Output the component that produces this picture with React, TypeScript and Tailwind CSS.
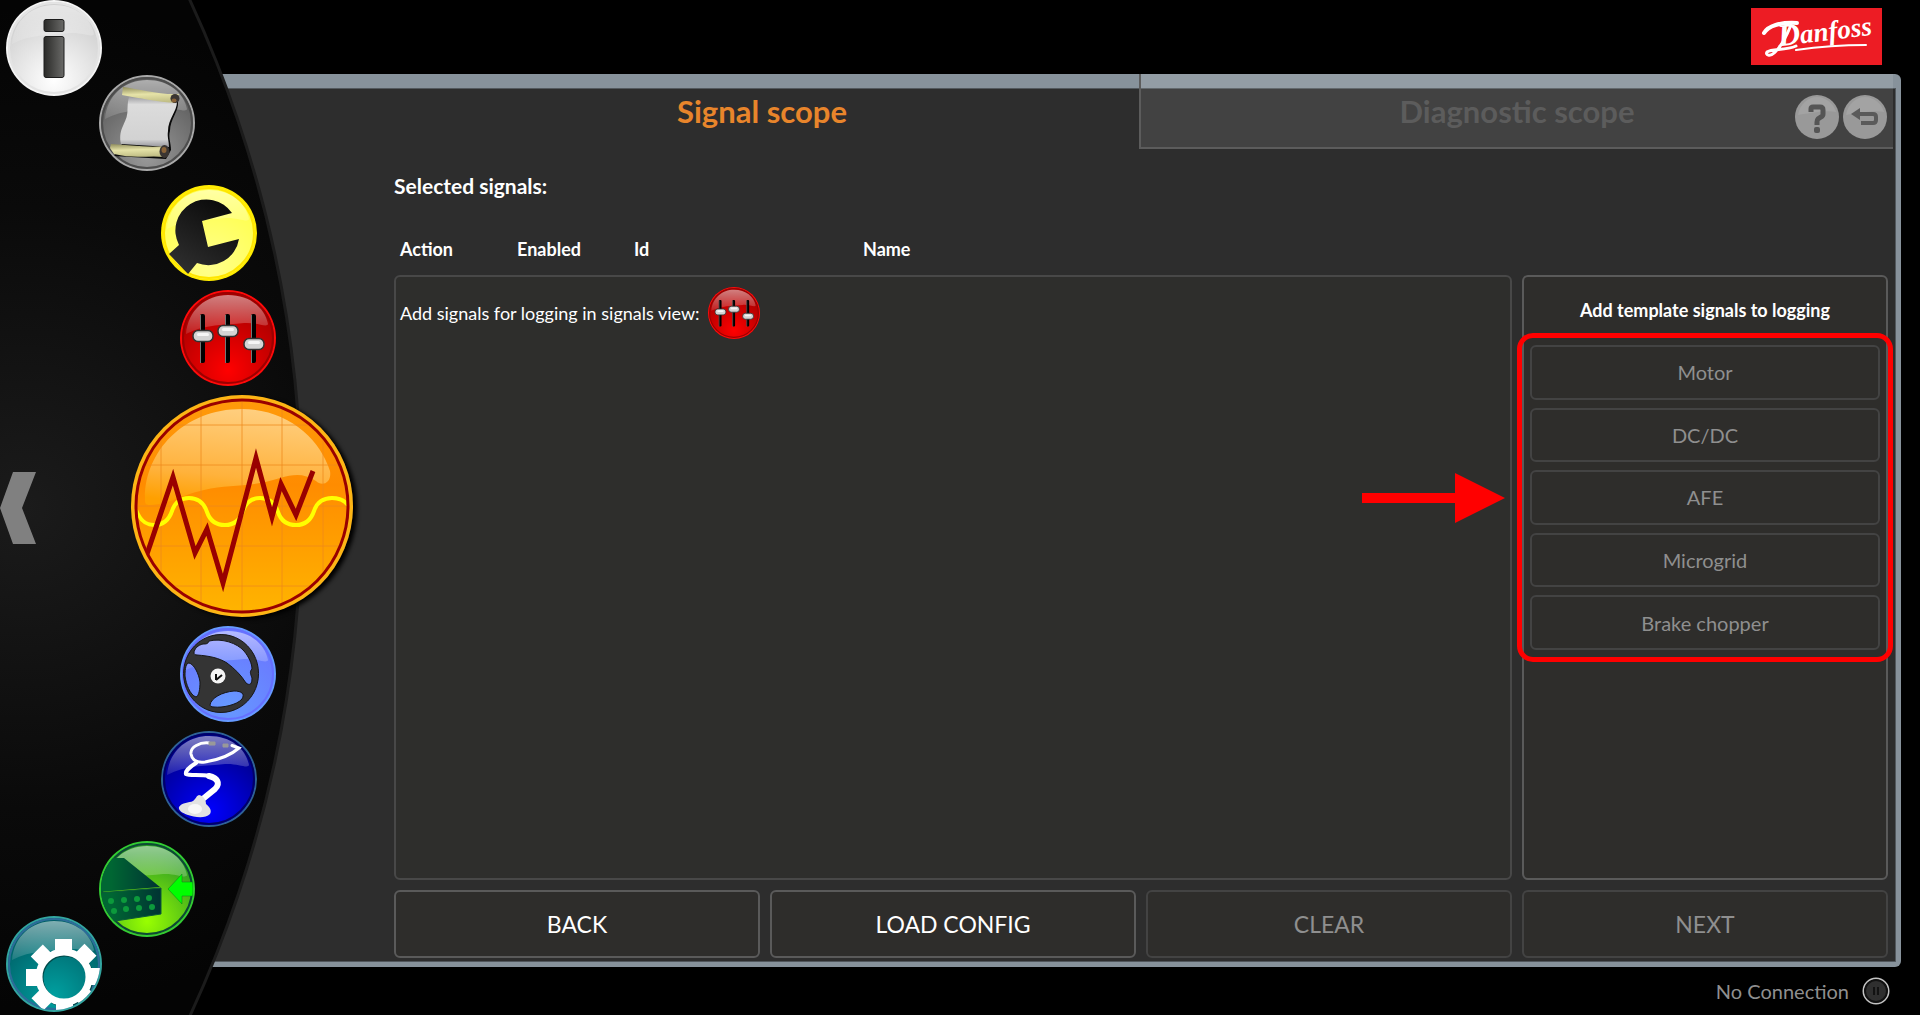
import type { ReactNode } from "react";
import clsx from "clsx";

const GLOSS = "M6 44C8 20 26 5 48 5s37 13 40 29c-1 4-12-2-24-1C45 35 25 34 6 44Z";

type OrbProps = {
  id: string;
  rim: string;
  inner: string;
  from: string;
  to: string;
  children: ReactNode;
};

function Orb({ id, rim, inner, from, to, children }: OrbProps) {
  return (
    <svg viewBox="0 0 96 96" className="block size-full" aria-hidden="true">
      <defs>
        <radialGradient id={`${id}-fill`} cx="0.5" cy="0.85" r="0.75">
          <stop offset="0" stopColor={from} />
          <stop offset="1" stopColor={to} />
        </radialGradient>
        <linearGradient id={`${id}-gloss`} x1="0" y1="0" x2="0" y2="1">
          <stop offset="0" stopColor="#fff" stopOpacity="0.5" />
          <stop offset="1" stopColor="#fff" stopOpacity="0.12" />
        </linearGradient>
        <clipPath id={`${id}-clip`}>
          <circle cx="48" cy="48" r="46" />
        </clipPath>
      </defs>
      <circle cx="48" cy="48" r="48" fill={rim} />
      <circle cx="48" cy="48" r="46" fill={`url(#${id}-fill)`} />
      <circle cx="48" cy="48" r="45" fill="none" stroke={inner} strokeWidth="2" />
      <path d={GLOSS} fill={`url(#${id}-gloss)`} />
      <g clipPath={`url(#${id}-clip)`}>{children}</g>
    </svg>
  );
}

function InfoIcon() {
  return (
    <Orb id="info" rim="#f4f4f4" inner="#e4e4e4" from="#ffffff" to="#cfcfcf">
      <defs>
        <linearGradient id="info-bar">
          <stop offset="0" stopColor="#2a2a28" />
          <stop offset="1" stopColor="#6a6a68" />
        </linearGradient>
      </defs>
      <g fill="url(#info-bar)" stroke="#1c1c1c">
        <rect x="38" y="19.500" width="20" height="12" rx="2" />
        <rect x="38" y="36.500" width="20" height="41" rx="2" />
      </g>
    </Orb>
  );
}

function ScrollIcon() {
  return (
    <Orb id="scroll" rim="#a9a9a9" inner="#4d4d4d" from="#9a9a9a" to="#5e5e5e">
      <defs>
        <linearGradient id="scroll-paper" x1="0" y1="0" x2="0" y2="1">
          <stop offset="0" stopColor="#9f9fa3" />
          <stop offset="0.15" stopColor="#dcdcdc" />
          <stop offset="0.85" stopColor="#d2d2d2" />
          <stop offset="1" stopColor="#96969c" />
        </linearGradient>
        <linearGradient id="scroll-roll" x1="0" y1="0" x2="0.15" y2="1">
          <stop offset="0" stopColor="#8f8c5c" />
          <stop offset="0.5" stopColor="#e6e3a8" />
          <stop offset="1" stopColor="#c2bf86" />
        </linearGradient>
      </defs>
      <path d="M31 24 79 27C80 36 71 44 71 56 69 62 72 68 72 75L67 84 15 81 23 69Z" fill="#0a0a0a" />
      <path d="M30 22 78 27C78 36 69 44 69 56 68 62 70 66 70 72L22 69C19 55 26 50 28 40 29 34 28 29 30 22Z" fill="url(#scroll-paper)" />
      <path d="M24 12C40 14 60 20 80 19L77 28C58 27 40 23 23 20Z" fill="url(#scroll-roll)" />
      <path d="M12 69C30 70 50 73 66 71L66 82C50 80 35 84 15 79L11 73Z" fill="url(#scroll-roll)" />
      <ellipse cx="76" cy="23.500" rx="4.500" ry="4.500" fill="#3a3532" />
      <ellipse cx="75" cy="25.500" rx="2.500" ry="2" fill="#8a6337" />
      <ellipse cx="65.500" cy="76.500" rx="5" ry="6.500" fill="#3a3532" />
      <ellipse cx="65" cy="75" rx="2.500" ry="3" fill="#8a6337" />
    </Orb>
  );
}

function WrenchIcon() {
  return (
    <Orb id="wrench" rim="#ffec00" inner="#ffe600" from="#ffff8c" to="#ffff4d">
      <defs>
        <linearGradient id="wrench-body" x1="0" y1="1" x2="0.6" y2="0">
          <stop offset="0" stopColor="#333" />
          <stop offset="1" stopColor="#0c0c0c" />
        </linearGradient>
      </defs>
      <path d="M71 28 41 36 47 62 78 54A31 31 0 0 1 36 78L27 89 8 69 18 60A31 31 0 0 1 71 28Z" fill="url(#wrench-body)" />
    </Orb>
  );
}

function SlidersIcon({ id }: { id: string }) {
  const knobs = [
    [23, 46],
    [48, 41],
    [74, 54],
  ];
  return (
    <Orb id={id} rim="#ff0a0a" inner="#9c0000" from="#ff0000" to="#a80000">
      {knobs.map(([x, y]) => (
        <g key={x}>
          <rect x={x - 3} y="24" width="5" height="49" rx="2" fill="#000" />
          <path d={`M${x - 2.5} 25v48`} stroke="#777" strokeWidth="1" />
          <rect x={x - 10} y={y - 5.5} width="20" height="11" rx="5" fill="#d4d4d4" stroke="#333" strokeWidth="1.500" />
          <rect x={x - 6} y={y - 3} width="12" height="3" rx="1.500" fill="#f5f5f5" />
        </g>
      ))}
    </Orb>
  );
}

function ScopeIcon() {
  return (
    <svg viewBox="0 0 222 222" className="block size-full" aria-hidden="true">
      <defs>
        <linearGradient id="scope-fill" x1="0" y1="0" x2="0" y2="1">
          <stop offset="0" stopColor="#ff9a0a" />
          <stop offset="0.4" stopColor="#ff8c00" />
          <stop offset="1" stopColor="#ffb400" />
        </linearGradient>
        <linearGradient id="scope-gloss" x1="0.6" y1="0" x2="0.4" y2="1">
          <stop offset="0" stopColor="#ffcf80" />
          <stop offset="0.7" stopColor="#ffb23c" />
          <stop offset="1" stopColor="#ffa000" />
        </linearGradient>
        <clipPath id="scope-clip">
          <circle cx="111" cy="111" r="105" />
        </clipPath>
      </defs>
      <circle cx="111" cy="111" r="111" fill="#fdb515" />
      <circle cx="111" cy="111" r="106" fill="url(#scope-fill)" />
      <g clipPath="url(#scope-clip)">
        <path
          d="M14 106C12 60 50 14 111 14c46 0 78 30 88 62 2 12-8 16-14 10-12-8-22-7-36-3-30 10-50 6-76 12-26 6-34 14-54 15-3 0-5-1-5-4Z"
          fill="url(#scope-gloss)"
        />
        <path
          d="M30 0v222M70 0v222M111 0v222M151 0v222M192 0v222M0 30h222M0 70h222M0 111h222M0 151h222M0 191h222"
          stroke="#ee8a1c"
          strokeOpacity="0.75"
        />
        <path
          d="M5 115C9 125 14 130 23 130 32 130 38 125 41 116 44 107 49 103 58 103 67 103 73 108 76 117 79 126 85 130 94 130 103 130 109 125 112 116 115 107 120 103 129 103 138 103 144 108 147 117 150 126 156 130 165 130 174 130 180 125 183 116 186 107 192 103 201 103 208 103 213 105 217 110"
          fill="none"
          stroke="#ffff00"
          strokeWidth="4"
        />
        <path
          d="M15 162 42 82 64 158 76 134 92 188 125 63 141 122 150 89 165 120 182 76"
          fill="none"
          stroke="#990000"
          strokeWidth="5"
          strokeMiterlimit="10"
        />
      </g>
      <circle cx="111" cy="111" r="106" fill="none" stroke="#990000" strokeWidth="3" />
    </svg>
  );
}

function WheelIcon() {
  return (
    <Orb id="wheel" rim="#669aff" inner="#6670ff" from="#6699ff" to="#6a78ff">
      <path
        fillRule="evenodd"
        d="M41 8.500a37.500 39 0 1 0 .1 0ZM14 27C14 23 18 19 23 18 26 18 28 18 29 15 42 12 57 17 64 25 69 31 72 38 72 43 69 46 71 49 72 52 72 58 70 60 66 57 61 49 55 43 47 37 39 32 30 30 17 29 15 29 14 28 14 27ZM9 37C14 38 19 48 20 56 20 63 19 70 16 71 10 69 6 58 5 50 5 42 6 37 9 37ZM30 79C31 72 42 66 54 65 62 65 65 68 62 73 57 79 42 82 34 81 31 81 30 80 30 79Z"
        fill="#343434"
        stroke="#161616"
      />
      <circle cx="38" cy="50" r="7.500" fill="#f5f5f5" />
      <path d="M36 54V48M36 54 42 49" fill="none" stroke="#111" strokeWidth="2" />
    </Orb>
  );
}

function StethoscopeIcon() {
  return (
    <Orb id="steth" rim="#2f6296" inner="#00006a" from="#0000ff" to="#00008c">
      <g fill="none" stroke="#fff" strokeLinecap="round">
        <path d="M48 12C39 11 29 16 30 23 31 29 36 32 44 31 57 29 70 24 78 17L71 14.500" strokeWidth="3" />
        <path d="M35 32C30 35 24 40 25 43 28 45 40 43 48 45" strokeWidth="4" />
        <path d="M48 45C56 47 60 52 54 58L43 67" strokeWidth="6" />
      </g>
      <path d="M48 11h6v3h-6ZM62 13h5v3h-5Z" fill="#999" stroke="#999" />
      <path d="M38 64C43 65 45 69 45 73 49 76 51 80 49 83 44 88 33 86 27 84 21 82 17 79 18 76 21 71 28 72 32 70 35 68 35 65 38 64Z" fill="#e2e2e2" />
      <ellipse cx="34" cy="78" rx="7" ry="5" fill="#f7f7f7" />
    </Orb>
  );
}

function DeviceIcon() {
  const ports = [
    [12, 60],
    [25, 59],
    [38, 58],
    [50, 57],
    [15, 70],
    [27, 68],
    [40, 67],
    [53, 66],
  ];
  return (
    <Orb id="device" rim="#33cc33" inner="#0c4a34" from="#99ff00" to="#2b9a26">
      <defs>
        <linearGradient id="device-box">
          <stop offset="0.2" stopColor="#006633" />
          <stop offset="1" stopColor="#003333" />
        </linearGradient>
      </defs>
      <path d="M0 17H25L61 46 0 51Z" fill="url(#device-box)" />
      <path d="M0 52 62 47V73L16 80 0 82Z" fill="url(#device-box)" stroke="#0a5a38" />
      {ports.map(([x, y]) => (
        <circle key={`${x}-${y}`} cx={x} cy={y} r="3" fill="#0c9a3c" />
      ))}
      <path d="M69 48 83 33V41H94V55H83V63Z" fill="#00ff00" stroke="#0a7a1c" strokeWidth="0.500" />
    </Orb>
  );
}

function GearIcon() {
  return (
    <Orb id="gear" rim="#33a5a0" inner="#2c6c98" from="#00a0a0" to="#005f66">
      <circle cx="59" cy="62" r="25" fill="none" stroke="#004a4a" strokeWidth="7" />
      <circle cx="58" cy="61" r="25" fill="none" stroke="#fff" strokeWidth="7" />
      {[0, 45, 90, 135, 180, 225, 270, 315].map((angle) => (
        <rect key={angle} x="49" y="23" width="17" height="13" fill="#fff" transform={`rotate(${angle} 58 61)`} />
      ))}
    </Orb>
  );
}

function HelpIcon() {
  return (
    <svg viewBox="0 0 44 44" className="block size-full" aria-hidden="true">
      <circle cx="22" cy="22" r="22" fill="#999" />
      <path d="M3 20C5 9 13 2 22 2s17 7 19 15c-9-2-24 1-38 3Z" fill="#a3a3a3" />
      <path d="M16 17v-3q0-2 2-2h7q3 0 3 3v4q0 2-2 3l-3 2q-1 1-1 3v3" fill="none" stroke="#555" strokeWidth="5" />
      <rect x="19" y="32" width="6" height="6" rx="2" fill="#555" />
    </svg>
  );
}

function ReturnIcon() {
  return (
    <svg viewBox="0 0 44 44" className="block size-full" aria-hidden="true">
      <circle cx="22" cy="22" r="22" fill="#999" />
      <path d="M3 20C5 9 13 2 22 2s17 7 19 15c-9-2-24 1-38 3Z" fill="#a3a3a3" />
      <path d="M15 19H30q3 0 3 3v3q0 3-3 3H18" fill="none" stroke="#5a5a5a" strokeWidth="4" />
      <path d="M8 19 17 13V25Z" fill="#5a5a5a" />
    </svg>
  );
}

function DanfossLogo() {
  return (
    <svg viewBox="0 0 131 57" className="h-[57px] w-[131px]" role="img" aria-label="Danfoss">
      <rect width="131" height="57" fill="#ed1c24" />
      <g fill="none" stroke="#fff" strokeLinecap="round">
        <path d="M13 25C17 18 29 14 46 15" strokeWidth="4" />
        <path d="M40 17C36 27 29 40 23 45 19 49 14 47 16 44 21 40 34 43 45 38" strokeWidth="3" />
        <path d="M45 42C66 39 90 37 115 37" strokeWidth="2" />
      </g>
      <g transform="rotate(-7 30 39)" fill="#fff" fontFamily="'Liberation Serif', serif" fontStyle="italic" fontWeight="700">
        <text x="28" y="38" fontSize="31">
          D<tspan fontSize="27">anfoss</tspan>
        </text>
      </g>
    </svg>
  );
}

const menuItems = [
  { label: "Information", icon: <InfoIcon />, place: "ml-[6px] size-24" },
  { label: "Log", icon: <ScrollIcon />, place: "ml-[99px] -mt-[21px] size-24" },
  { label: "Tools", icon: <WrenchIcon />, place: "ml-[161px] mt-[14px] size-24" },
  { label: "Signals", icon: <SlidersIcon id="menu-sliders" />, place: "ml-[180px] mt-[9px] size-24" },
  {
    label: "Scope",
    icon: <ScopeIcon />,
    place: "ml-[131px] my-[9px] size-[222px] shadow-[4px_2px_4px_#000]",
  },
  { label: "Drive", icon: <WheelIcon />, place: "ml-[180px] size-24" },
  { label: "Diagnostics", icon: <StethoscopeIcon />, place: "ml-[161px] mt-[9px] size-24" },
  { label: "Device", icon: <DeviceIcon />, place: "ml-[99px] mt-[14px] size-24" },
  { label: "Settings", icon: <GearIcon />, place: "ml-[6px] -mt-[21px] size-24" },
];

const templates = ["Motor", "DC/DC", "AFE", "Microgrid", "Brake chopper"];

const actions = [
  { label: "BACK", enabled: true },
  { label: "LOAD CONFIG", enabled: true },
  { label: "CLEAR", enabled: false },
  { label: "NEXT", enabled: false },
];

function SideMenu() {
  return (
    <nav className="absolute inset-y-0 left-0 w-[385px] overflow-hidden">
      {/* Dial the round menu sits on */}
      <div className="absolute top-1/2 -left-[2123px] size-[2426px] -translate-y-1/2 rounded-full border-[3px] border-[#1b1b1b] bg-[radial-gradient(circle_at_2145px_50%,#1b1b1b,#0a0a0a_300px,#040404_500px)]" />
      <button aria-label="Collapse menu" className="absolute top-1/2 left-0 -translate-y-1/2">
        <svg viewBox="0 0 36 72" className="h-[72px] w-9" aria-hidden="true">
          <path d="M0 36 13 0H36L22 36 36 72H13Z" fill="#808080" />
        </svg>
      </button>
      <div className="pointer-events-none relative flex h-full flex-col items-start justify-center pb-[3px]">
        {menuItems.map((item) => (
          <button
            key={item.label}
            aria-label={item.label}
            className={clsx("pointer-events-auto shrink-0 rounded-full", item.place)}
          >
            {item.icon}
          </button>
        ))}
      </div>
    </nav>
  );
}

function TemplatePanel() {
  return (
    <aside className="mt-[75px] rounded-md border-2 border-[#5a5a5a] bg-[#2e2d2b] px-[6px] pt-[19px]">
      <h3 className="mb-[21px] text-center text-[18px] leading-7 font-bold text-white">
        Add template signals to logging
      </h3>
      <div className="relative grid h-[305px] grid-rows-5 gap-2">
        {templates.map((name) => (
          <button
            key={name}
            disabled
            className="rounded-md border-2 border-[#434343] text-[20px] leading-7 text-[#8f8f8f]"
          >
            {name}
          </button>
        ))}
        {/* Callout round the template list */}
        <div className="pointer-events-none absolute -inset-x-[13px] -inset-y-3 rounded-2xl border-[5px] border-[#ff0000]" />
        <svg
          viewBox="0 0 143 50"
          className="absolute top-1/2 right-full mr-[25px] h-[50px] w-[143px] -translate-y-1/2"
          aria-hidden="true"
        >
          <path d="M0 20H93V0L143 25 93 50V30H0Z" fill="#ff0000" />
        </svg>
      </div>
    </aside>
  );
}

function SignalTable() {
  return (
    <table className="col-span-3 h-full w-full table-fixed border-separate border-spacing-0 text-left text-[18px] leading-7 text-white">
      <thead>
        <tr className="h-[75px] align-bottom font-bold">
          <th className="w-[117px] pb-3 pl-[6px]">Action</th>
          <th className="w-[117px] pb-3 pl-[6px]">Enabled</th>
          <th className="w-[229px] pb-3 pl-[6px]">Id</th>
          <th className="pb-3 pl-[6px]">Name</th>
        </tr>
      </thead>
      <tbody>
        <tr className="align-top">
          <td colSpan={4} className="rounded-md border-2 border-[#484848] bg-[#2e2e2c] pt-[10px] pl-1">
            <div className="flex items-center gap-2">
              <span>Add signals for logging in signals view:</span>
              <button aria-label="Open signals view" className="size-[52px]">
                <SlidersIcon id="hint-sliders" />
              </button>
            </div>
          </td>
        </tr>
      </tbody>
    </table>
  );
}

export default function App() {
  return (
    <div className="relative flex h-screen min-h-[900px] flex-col overflow-hidden bg-black font-['Lato',sans-serif]">
      <header className="flex h-[74px] shrink-0 justify-end pt-2 pr-[38px]">
        <DanfossLogo />
      </header>

      <main className="mr-[19px] flex flex-1 flex-col rounded-r-md border-t-[14px] border-r-[5px] border-b-[5px] border-[#87929b] bg-[#2d2d2d] pl-[385px] shadow-[inset_0_0_0_1px_#52585d]">
        <div className="relative -mt-[14px] mr-[3px] grid h-[75px] grid-cols-2 text-[31px] leading-9 font-bold">
          <button className="pb-[2px] text-[#e8852b]">Signal scope</button>
          <button className="border-b-2 border-l-2 border-[#5c5c5c] bg-white/10 text-[#5c5c5c]">
            Diagnostic scope
          </button>
          <div className="absolute right-[6px] bottom-[10px] flex gap-1">
            <button aria-label="Help" className="size-11">
              <HelpIcon />
            </button>
            <button aria-label="Return" className="size-11">
              <ReturnIcon />
            </button>
          </div>
        </div>

        <section className="flex flex-1 flex-col pt-[23px] pr-2 pb-1 pl-[9px]">
          <h2 className="text-[21px] leading-7 font-bold text-white">Selected signals:</h2>
          <div className="grid flex-1 grid-cols-4 gap-[10px]">
            <SignalTable />
            <TemplatePanel />
          </div>
          <div className="mt-[10px] grid grid-cols-4 gap-[10px]">
            {actions.map(({ label, enabled }) => (
              <button
                key={label}
                disabled={!enabled}
                className={clsx(
                  "h-[68px] rounded-md border-2 bg-[#2e2d2b] text-[23px] leading-8",
                  enabled ? "border-[#5a5a5a] text-white" : "border-[#434343] text-[#8f8f8f]"
                )}
              >
                {label}
              </button>
            ))}
          </div>
        </section>
      </main>

      <footer className="flex h-12 shrink-0 items-center justify-end gap-[13px] pr-[30px]">
        <span className="text-[20px] leading-7 text-[#8f8f8f]">No Connection</span>
        <svg viewBox="0 0 28 28" className="size-7" aria-hidden="true">
          <circle cx="14" cy="14" r="12.500" fill="#2f2f2f" stroke="#c4c4c4" strokeWidth="2" />
          <circle cx="14" cy="14" r="11" fill="none" stroke="#111" strokeWidth="2" />
          <path d="M12 10v8M16 10v8" stroke="#0a0a0a" strokeWidth="1.500" />
        </svg>
      </footer>

      <SideMenu />
    </div>
  );
}
